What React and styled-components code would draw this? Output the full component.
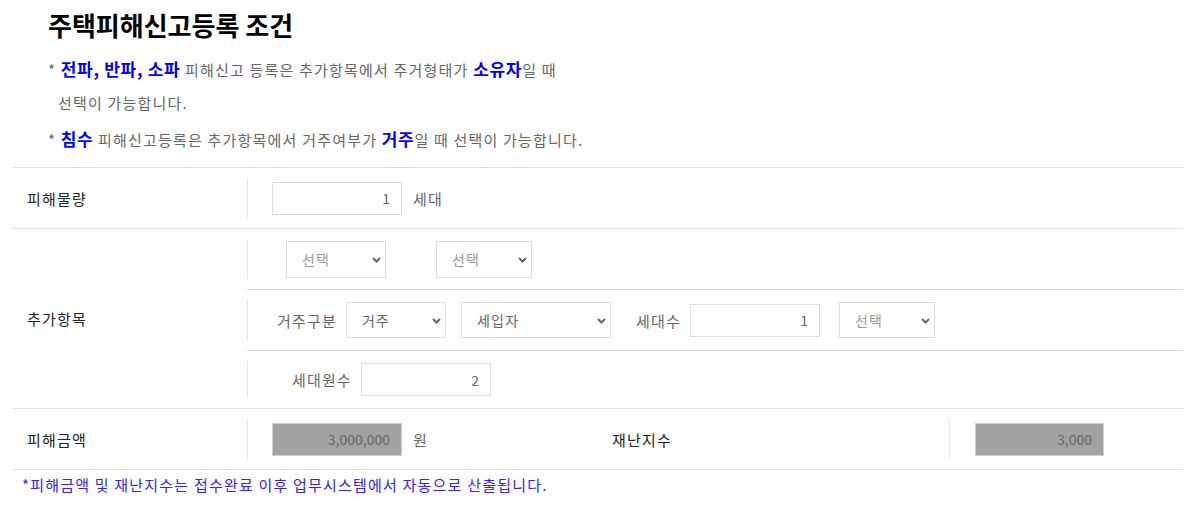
import React from "react";
import styled, { createGlobalStyle } from "styled-components";

const GlobalStyle = createGlobalStyle`
    * { box-sizing: border-box; }
    html, body { margin: 0; padding: 0; background: #fff; }
    body {
        font-family: "Malgun Gothic", "Noto Sans CJK KR", "Noto Sans", sans-serif;
        color: #222;
    }
`;

const Wrap = styled.div`
    width: 1186px;
    padding: 8px 3px 0 13px;
`;

const Head = styled.div`
    padding-left: 35px;
`;

const Title = styled.h2`
    margin: 0;
    font-size: 26px;
    line-height: 34px;
    font-weight: 700;
    color: #000;
`;

const NoteList = styled.ul`
    list-style: none;
    margin: 10px 0 0;
    padding: 0;
`;

const NoteItem = styled.li`
    font-size: 15px;
    line-height: 33px;
    color: #666;
    letter-spacing: 1.2px;
    padding-left: 10px;
    text-indent: -10px;
    & + & { margin-top: 3px; }
    strong {
        font-size: 17px;
        font-weight: 700;
        color: #0000ff;
        letter-spacing: 0.7px;
    }
`;

const Table = styled.div`
    margin-top: 11px;
    width: 1170px;
    border-top: 1px solid #dddddd;
`;

const Row = styled.div`
    display: flex;
    border-bottom: 1px solid #dddddd;
`;

const Th = styled.div`
    width: ${(p) => p.$w}px;
    flex: 0 0 ${(p) => p.$w}px;
    display: flex;
    align-items: center;
    padding-left: 14px;
    font-size: 15px;
    letter-spacing: 1.2px;
    color: #222;
`;

const Td = styled.div`
    display: flex;
    align-items: center;
    height: ${(p) => p.$h || 60}px;
    width: ${(p) => (p.$w ? p.$w + "px" : "auto")};
    flex: ${(p) => (p.$w ? `0 0 ${p.$w}px` : "1")};
    padding-left: ${(p) => p.$pl || 0}px;
`;

const Divider = styled.span`
    align-self: stretch;
    width: 1px;
    margin: 10px 0;
    background: #e6e6e6;
`;

const SubRows = styled.div`
    flex: 1;
    display: flex;
    flex-direction: column;
`;

const SubRow = styled.div`
    display: flex;
    height: ${(p) => p.$h}px;
    & + & { border-top: 1px solid #dddddd; }
`;

const Text = styled.span`
    font-size: 15px;
    letter-spacing: 1.2px;
    color: #666;
    margin-left: ${(p) => p.$ml || 0}px;
    white-space: nowrap;
`;

const NumInput = styled.input`
    width: ${(p) => p.$w || 130}px;
    height: 33px;
    margin-left: ${(p) => p.$ml || 0}px;
    padding: 0 11px 0 8px;
    border: 1px solid ${(p) => (p.$gray ? "#cfcfcf" : "#dddddd")};
    background: ${(p) => (p.$gray ? "#a2a2a2" : "#fff")};
    color: #666;
    text-align: right;
    font-family: inherit;
    font-size: 14px;
    outline: none;
`;

const SelectWrap = styled.span`
    position: relative;
    display: inline-flex;
    margin-left: ${(p) => p.$ml || 0}px;
`;

const Select = styled.select`
    appearance: none;
    -webkit-appearance: none;
    width: ${(p) => p.$w}px;
    height: ${(p) => p.$h || 37}px;
    padding: 0 20px 0 15px;
    border: 1px solid #dddddd;
    background: #fff;
    border-radius: 0;
    color: ${(p) => (p.$muted ? "#999" : "#666")};
    font-family: inherit;
    font-size: 14px;
    letter-spacing: 1.2px;
    outline: none;
`;

const Chevron = styled.svg`
    position: absolute;
    right: 5px;
    top: 50%;
    margin-top: -2px;
    width: 9px;
    height: 6px;
    pointer-events: none;
`;

const Footnote = styled.p`
    margin: 4px 0 0 9px;
    font-size: 15px;
    line-height: 22px;
    letter-spacing: 1.2px;
    color: #3322ff;
`;

const Dropdown = ({ w, h, ml, muted, value }) => (
    <SelectWrap $ml={ml}>
        <Select $w={w} $h={h} $muted={muted} defaultValue={value}>
            <option>{value}</option>
        </Select>
        <Chevron viewBox="0 0 9 6">
            <path d="M1 1 L4.5 4.5 L8 1" fill="none" stroke="#666" strokeWidth="2" />
        </Chevron>
    </SelectWrap>
);

const App = () => {
    return (
        <>
            <GlobalStyle />
            <Wrap>
                <Head>
                    <Title>주택피해신고등록 조건</Title>
                    <NoteList>
                        <NoteItem>
                            * <strong>전파, 반파, 소파</strong> 피해신고 등록은 추가항목에서 주거형태가 <strong>소유자</strong>일 때
                            <br />
                            선택이 가능합니다.
                        </NoteItem>
                        <NoteItem>
                            * <strong>침수</strong> 피해신고등록은 추가항목에서 거주여부가 <strong>거주</strong>일 때 선택이 가능합니다.
                        </NoteItem>
                    </NoteList>
                </Head>

                <Table>
                    <Row>
                        <Th $w={234}>피해물량</Th>
                        <Divider />
                        <Td $pl={24}>
                            <NumInput defaultValue="1" />
                            <Text $ml={11}>세대</Text>
                        </Td>
                    </Row>

                    <Row>
                        <Th $w={234}>추가항목</Th>
                        <SubRows>
                            <SubRow $h={60}>
                                <Divider />
                                <Td $pl={38}>
                                    <Dropdown w={100} muted value="선택" />
                                    <Dropdown w={96} ml={50} muted value="선택" />
                                </Td>
                            </SubRow>
                            <SubRow $h={61}>
                                <Divider />
                                <Td $pl={29}>
                                    <Text>거주구분</Text>
                                    <Dropdown w={100} h={36} ml={9} value="거주" />
                                    <Dropdown w={150} h={36} ml={15} value="세입자" />
                                    <Text $ml={25}>세대수</Text>
                                    <NumInput $ml={9} defaultValue="1" />
                                    <Dropdown w={96} h={36} ml={19} muted value="선택" />
                                </Td>
                            </SubRow>
                            <SubRow $h={58}>
                                <Divider />
                                <Td $h={57} $pl={44}>
                                    <Text>세대원수</Text>
                                    <NumInput $ml={9} defaultValue="2" />
                                </Td>
                            </SubRow>
                        </SubRows>
                    </Row>

                    <Row>
                        <Th $w={234}>피해금액</Th>
                        <Divider />
                        <Td $w={350} $pl={24}>
                            <NumInput $gray readOnly defaultValue="3,000,000" />
                            <Text $ml={11}>원</Text>
                        </Td>
                        <Th $w={351}>재난지수</Th>
                        <Divider />
                        <Td $pl={25}>
                            <NumInput $w={129} $gray readOnly defaultValue="3,000" />
                        </Td>
                    </Row>
                </Table>

                <Footnote>*피해금액 및 재난지수는 접수완료 이후 업무시스템에서 자동으로 산출됩니다.</Footnote>
            </Wrap>
        </>
    );
};

export default App;
